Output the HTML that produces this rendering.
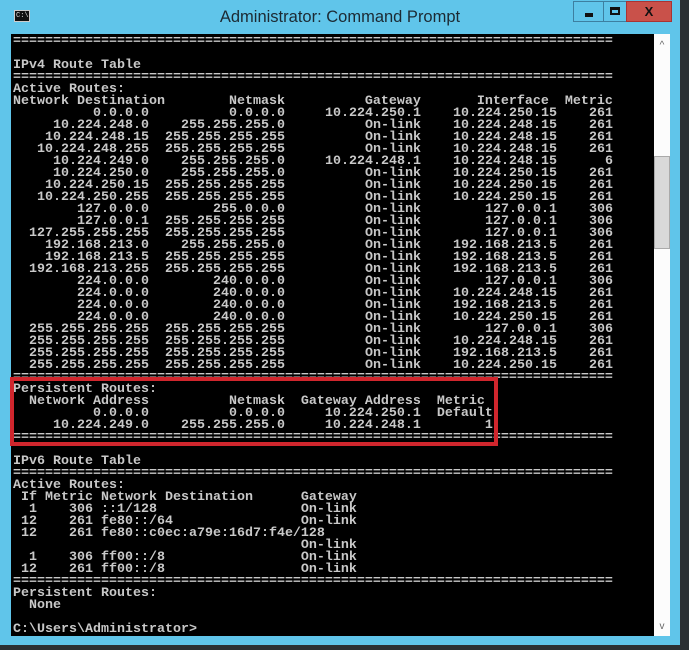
<!DOCTYPE html>
<html><head><meta charset="utf-8"><style>
body{margin:0;width:689px;height:650px;background:#2b2f33;position:relative;overflow:hidden;font-family:"Liberation Sans",sans-serif}
#frame{position:absolute;left:0;top:0;width:680px;height:645px;background:#60c5ea}
#title{position:absolute;left:0;top:8px;width:680px;text-align:center;font-size:16.5px;color:#1c2a33}
#icon{position:absolute;left:14px;top:10px;width:16px;height:12px;background:#111;border:1px solid #ccc;box-sizing:border-box;color:#ddd;font-size:7px;line-height:10px;font-family:"Liberation Mono",monospace;padding-left:1px}
.btn{position:absolute;top:1px;height:21px;border:1px solid #3d7fa0;box-sizing:border-box}
#con{position:absolute;left:11px;top:34px;width:643px;height:602px;background:#000}
#sb{position:absolute;left:654px;top:34px;width:16px;height:602px;background:#fcfcfc}
#thumb{position:absolute;left:654px;top:156px;width:16px;height:93px;background:#d9d9d9;border:1px solid #aaa;box-sizing:border-box}
pre{position:absolute;left:13px;top:36px;margin:0;font-family:"Liberation Mono",monospace;font-size:13.33px;line-height:12px;color:#c8c8c8;font-weight:bold;letter-spacing:0}
.r span{display:inline-block;width:136px;text-align:right}
.r span.m{width:56px}
#box{position:absolute;left:10px;top:377px;width:488px;height:69px;border:4px solid #d0262d;box-sizing:border-box}
</style></head><body>
<div id="frame"></div>
<div id="icon">C:\</div>
<div id="title">Administrator: Command Prompt</div>
<div class="btn" style="left:573px;width:31px;"><div style="position:absolute;left:11px;top:11px;width:8px;height:4px;background:#111"></div></div>
<div class="btn" style="left:603px;width:24px;"><div style="position:absolute;left:6px;top:5px;width:10px;height:8px;border:2px solid #111;border-top-width:3px;box-sizing:border-box"></div></div>
<div class="btn" style="left:626px;width:46px;background:#c9514a;border-color:#a33;color:#111;font-size:13px;font-weight:bold;text-align:center;line-height:19px">X</div>
<div id="con"></div>
<div id="sb"><div style="text-align:center;font-size:10px;color:#666;margin-top:6px">^</div><div style="position:absolute;bottom:4px;width:16px;text-align:center;font-size:10px;color:#666">v</div></div>
<div id="thumb"></div>
<pre>===========================================================================

IPv4 Route Table
===========================================================================
Active Routes:
Network Destination        Netmask          Gateway       Interface  Metric
<span class="r"><span>0.0.0.0</span><span>0.0.0.0</span><span>10.224.250.1</span><span>10.224.250.15</span><span class="m">261</span></span>
<span class="r"><span>10.224.248.0</span><span>255.255.255.0</span><span>On-link</span><span>10.224.248.15</span><span class="m">261</span></span>
<span class="r"><span>10.224.248.15</span><span>255.255.255.255</span><span>On-link</span><span>10.224.248.15</span><span class="m">261</span></span>
<span class="r"><span>10.224.248.255</span><span>255.255.255.255</span><span>On-link</span><span>10.224.248.15</span><span class="m">261</span></span>
<span class="r"><span>10.224.249.0</span><span>255.255.255.0</span><span>10.224.248.1</span><span>10.224.248.15</span><span class="m">6</span></span>
<span class="r"><span>10.224.250.0</span><span>255.255.255.0</span><span>On-link</span><span>10.224.250.15</span><span class="m">261</span></span>
<span class="r"><span>10.224.250.15</span><span>255.255.255.255</span><span>On-link</span><span>10.224.250.15</span><span class="m">261</span></span>
<span class="r"><span>10.224.250.255</span><span>255.255.255.255</span><span>On-link</span><span>10.224.250.15</span><span class="m">261</span></span>
<span class="r"><span>127.0.0.0</span><span>255.0.0.0</span><span>On-link</span><span>127.0.0.1</span><span class="m">306</span></span>
<span class="r"><span>127.0.0.1</span><span>255.255.255.255</span><span>On-link</span><span>127.0.0.1</span><span class="m">306</span></span>
<span class="r"><span>127.255.255.255</span><span>255.255.255.255</span><span>On-link</span><span>127.0.0.1</span><span class="m">306</span></span>
<span class="r"><span>192.168.213.0</span><span>255.255.255.0</span><span>On-link</span><span>192.168.213.5</span><span class="m">261</span></span>
<span class="r"><span>192.168.213.5</span><span>255.255.255.255</span><span>On-link</span><span>192.168.213.5</span><span class="m">261</span></span>
<span class="r"><span>192.168.213.255</span><span>255.255.255.255</span><span>On-link</span><span>192.168.213.5</span><span class="m">261</span></span>
<span class="r"><span>224.0.0.0</span><span>240.0.0.0</span><span>On-link</span><span>127.0.0.1</span><span class="m">306</span></span>
<span class="r"><span>224.0.0.0</span><span>240.0.0.0</span><span>On-link</span><span>10.224.248.15</span><span class="m">261</span></span>
<span class="r"><span>224.0.0.0</span><span>240.0.0.0</span><span>On-link</span><span>192.168.213.5</span><span class="m">261</span></span>
<span class="r"><span>224.0.0.0</span><span>240.0.0.0</span><span>On-link</span><span>10.224.250.15</span><span class="m">261</span></span>
<span class="r"><span>255.255.255.255</span><span>255.255.255.255</span><span>On-link</span><span>127.0.0.1</span><span class="m">306</span></span>
<span class="r"><span>255.255.255.255</span><span>255.255.255.255</span><span>On-link</span><span>10.224.248.15</span><span class="m">261</span></span>
<span class="r"><span>255.255.255.255</span><span>255.255.255.255</span><span>On-link</span><span>192.168.213.5</span><span class="m">261</span></span>
<span class="r"><span>255.255.255.255</span><span>255.255.255.255</span><span>On-link</span><span>10.224.250.15</span><span class="m">261</span></span>
===========================================================================
Persistent Routes:
  Network Address          Netmask  Gateway Address  Metric
          0.0.0.0          0.0.0.0     10.224.250.1  Default
     10.224.249.0    255.255.255.0     10.224.248.1        1
===========================================================================

IPv6 Route Table
===========================================================================
Active Routes:
 If Metric Network Destination      Gateway
  1    306 ::1/128                  On-link
 12    261 fe80::/64                On-link
 12    261 fe80::c0ec:a79e:16d7:f4e/128
                                    On-link
  1    306 ff00::/8                 On-link
 12    261 ff00::/8                 On-link
===========================================================================
Persistent Routes:
  None

C:\Users\Administrator&gt;</pre>
<div id="box"></div>
</body></html>
